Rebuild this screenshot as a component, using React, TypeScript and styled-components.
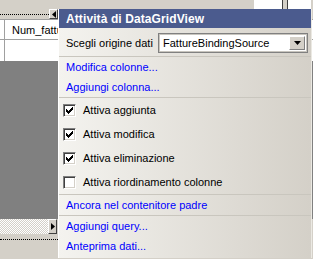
import React from "react";
import styled, { createGlobalStyle } from "styled-components";

const GlobalStyle = createGlobalStyle`
  html, body {
    margin: 0;
    padding: 0;
    background: #d4d0c8;
  }
  body {
    font-family: "Liberation Sans", Arial, sans-serif;
    font-size: 11px;
  }
`;

const Screen = styled.div`
  position: relative;
  width: 313px;
  height: 259px;
  overflow: hidden;
  background: #d4d0c8;
  display: flex;
  flex-direction: column;
`;

/* ---- the grid lying behind the smart tag ---- */

const TopStrip = styled.div`
  height: 9px;
  display: flex;
  flex-shrink: 0;
`;

const Spacer = styled.div<{ $w?: number }>`
  flex: ${({ $w }) => ($w ? `0 0 ${$w}px` : "1")};
`;

const WhiteBlock = styled.div<{ $w: number }>`
  width: ${({ $w }) => $w}px;
  background: #fff;
`;

const BlockGap = styled.div`
  width: 4px;
  border-left: 1px solid #404040;
  border-right: 1px solid #404040;
  background: #d4d0c8;
`;

const NavBand = styled.div`
  height: 10px;
  display: flex;
  flex-shrink: 0;
`;

const DottedTrack = styled.div<{ $w: number }>`
  width: ${({ $w }) => $w}px;
  display: flex;
  flex-direction: column;
  justify-content: center;
  &::after {
    content: "";
    border-top: 1px dotted #000;
  }
`;

const NavButton = styled.div<{ $h: number }>`
  width: 9px;
  height: ${({ $h }) => $h}px;
  box-sizing: border-box;
  background: #d4d0c8;
  border-top: 1px solid #fff;
  border-left: 1px solid #fff;
  border-right: 1px solid #404040;
  border-bottom: 1px solid #404040;
  display: flex;
  align-items: center;
  justify-content: center;
`;

const GridRow = styled.div<{ $header?: boolean }>`
  height: 21px;
  flex-shrink: 0;
  display: flex;
  align-items: center;
  background: #fff;
  border-top: ${({ $header }) => ($header ? "1px solid #a0a0a0" : "none")};
  border-bottom: ${({ $header }) => ($header ? "1px solid #a0a0a0" : "none")};
  box-sizing: border-box;
`;

const RowHeadCell = styled.div`
  width: 4px;
  align-self: stretch;
  border-right: 1px solid #a0a0a0;
  margin-right: 7px;
`;

const HeaderText = styled.span`
  color: #000;
  white-space: nowrap;
`;

const EmptyArea = styled.div`
  flex: 1;
  background: #808080;
`;

const ScrollRow = styled.div`
  height: 15px;
  flex-shrink: 0;
  display: flex;
  background: #d4d0c8;
`;

const Checker = styled.div`
  width: 48px;
  background: repeating-conic-gradient(#fff 0 25%, #d4d0c8 0 50%) 0 0 / 2px 2px;
`;

const BottomBand = styled.div`
  height: 25px;
  flex-shrink: 0;
  display: flex;
  flex-direction: column;
`;

const BottomDots = styled.div`
  width: 58px;
  margin-top: 5px;
  border-top: 1px dotted #000;
`;

/* ---- smart tag panel ---- */

const Panel = styled.div`
  position: absolute;
  left: 58px;
  top: 9px;
  width: 254px;
  height: 249px;
  box-sizing: border-box;
  border-left: 1px solid #fff;
  border-right: 1px solid #ebe9e3;
  background: linear-gradient(to right, #f4f3ef, #d4d0c8);
  display: flex;
  flex-direction: column;
`;

const Title = styled.div`
  height: 19px;
  flex-shrink: 0;
  background: #4b5b8e;
  color: #fff;
  font-size: 12px;
  font-weight: bold;
  letter-spacing: 0.1px;
  display: flex;
  align-items: center;
  padding-left: 7px;
`;

const ComboSection = styled.div`
  display: flex;
  align-items: center;
  height: 28px;
  flex-shrink: 0;
  padding: 4px 3px 3px 7px;
  box-sizing: border-box;
`;

const Label = styled.span`
  width: 92px;
  color: #000;
  white-space: nowrap;
`;

const Combo = styled.div`
  flex: 1;
  height: 20px;
  box-sizing: border-box;
  border: 1px solid #808080;
  box-shadow: inset 0 0 0 1px #c8c5be;
  background: #fff;
  display: flex;
  align-items: center;
  padding: 2px;
`;

const ComboText = styled.span`
  flex: 1;
  padding-left: 2px;
  color: #000;
`;

const DropButton = styled.div`
  width: 16px;
  height: 14px;
  box-sizing: border-box;
  background: #d4d0c8;
  border-top: 1px solid #fff;
  border-left: 1px solid #fff;
  border-right: 1px solid #808080;
  border-bottom: 1px solid #808080;
  display: flex;
  align-items: center;
  justify-content: center;
`;

const Separator = styled.div`
  height: 1px;
  flex-shrink: 0;
  background: #c9c6be;
`;

const Section = styled.div`
  display: flex;
  flex-direction: column;
  flex-shrink: 0;
`;

const LinkRow = styled.a`
  height: 20px;
  display: flex;
  align-items: center;
  padding-left: 7px;
  color: #0000ff;
  text-decoration: none;
  white-space: nowrap;
`;

const CheckRow = styled.label`
  height: 24px;
  display: flex;
  align-items: center;
  gap: 7px;
  padding-left: 4px;
  color: #000;
  white-space: nowrap;
`;

const CheckBox = styled.span`
  width: 13px;
  height: 13px;
  box-sizing: border-box;
  background: #fff;
  border-top: 1px solid #808080;
  border-left: 1px solid #808080;
  border-right: 1px solid #fff;
  border-bottom: 1px solid #fff;
  box-shadow: inset 1px 1px 0 #404040, inset -1px -1px 0 #d4d0c8;
  display: flex;
  align-items: center;
  justify-content: center;
`;

const checks = [
  { label: "Attiva aggiunta", on: true },
  { label: "Attiva modifica", on: true },
  { label: "Attiva eliminazione", on: true },
  { label: "Attiva riordinamento colonne", on: false },
];

const Tick = () => (
  <svg width="7" height="7" viewBox="0 0 7 7">
    <path d="M0 2h1v1h1v1h1v-1h1v-1h1v-1h1v-1h1v3h-1v1h-1v1h-1v1h-1v1h-1v-1h-1v-1h-1z" fill="#000" />
  </svg>
);

export default function App() {
  return (
    <>
      <GlobalStyle />
      <Screen>
        <TopStrip>
          <Spacer />
          <WhiteBlock $w={28} />
          <BlockGap />
          <WhiteBlock $w={23} />
          <Spacer $w={2} />
        </TopStrip>
        <NavBand>
          <DottedTrack $w={49} />
          <NavButton $h={10}>
            <svg width="4" height="7" viewBox="0 0 4 7">
              <path d="M4 0v7L0 3.5z" fill="#000" />
            </svg>
          </NavButton>
        </NavBand>
        <GridRow $header>
          <RowHeadCell />
          <HeaderText>Num_fatture</HeaderText>
        </GridRow>
        <GridRow>
          <RowHeadCell />
        </GridRow>
        <EmptyArea />
        <ScrollRow>
          <Checker />
          <NavButton $h={15}>
            <svg width="4" height="7" viewBox="0 0 4 7">
              <path d="M0 0v7L4 3.5z" fill="#000" />
            </svg>
          </NavButton>
        </ScrollRow>
        <BottomBand>
          <BottomDots />
        </BottomBand>

        <Panel>
          <Title>Attività di DataGridView</Title>
          <ComboSection>
            <Label>Scegli origine dati</Label>
            <Combo>
              <ComboText>FattureBindingSource</ComboText>
              <DropButton>
                <svg width="7" height="4" viewBox="0 0 7 4">
                  <path d="M0 0h7L3.5 4z" fill="#000" />
                </svg>
              </DropButton>
            </Combo>
          </ComboSection>
          <Separator />
          <Section>
            <LinkRow>Modifica colonne...</LinkRow>
            <LinkRow>Aggiungi colonna...</LinkRow>
          </Section>
          <Separator />
          <Section>
            {checks.map((c, i) => (
              <CheckRow key={i}>
                <CheckBox>{c.on && <Tick />}</CheckBox>
                {c.label}
              </CheckRow>
            ))}
          </Section>
          <Separator />
          <Section>
            <LinkRow>Ancora nel contenitore padre</LinkRow>
          </Section>
          <Separator />
          <Section>
            <LinkRow>Aggiungi query...</LinkRow>
            <LinkRow>Anteprima dati...</LinkRow>
          </Section>
        </Panel>
      </Screen>
    </>
  );
}
